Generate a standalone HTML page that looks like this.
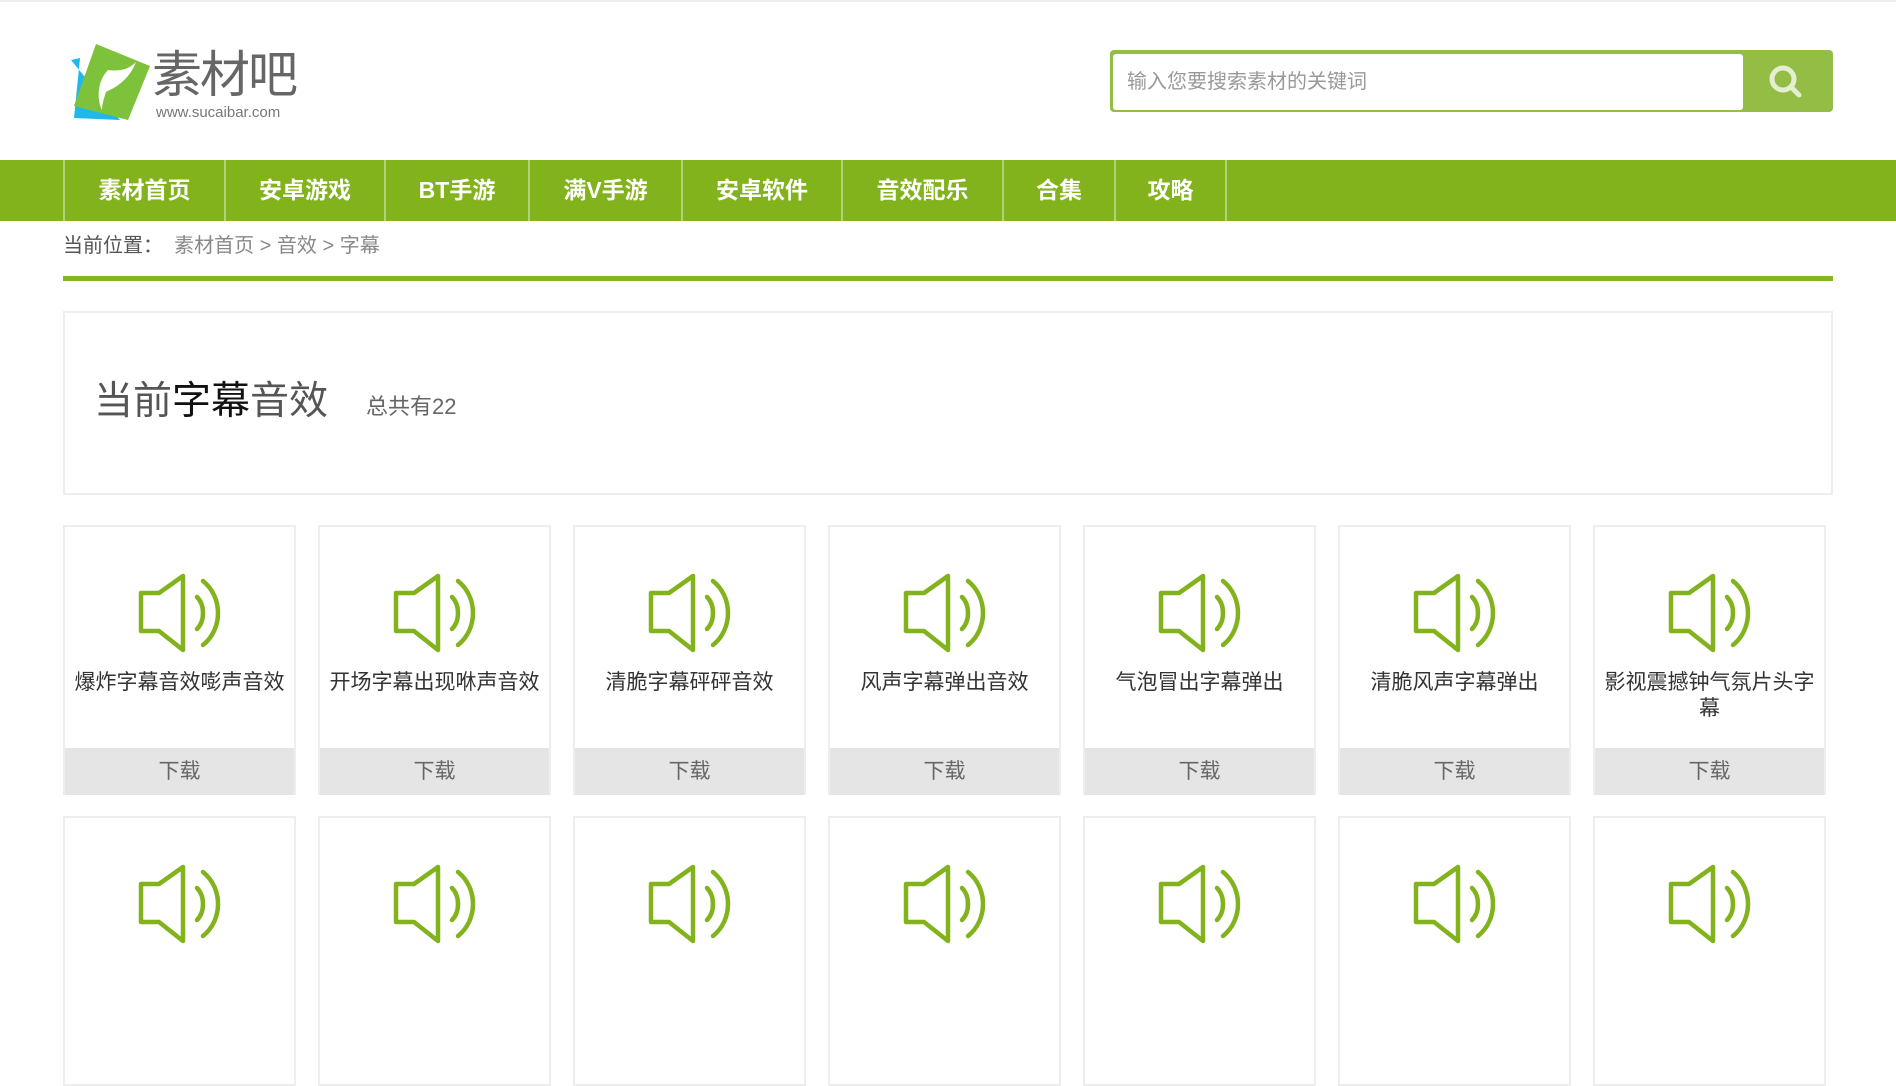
<!DOCTYPE html>
<html><head><meta charset="utf-8"><style>
*{margin:0;padding:0;box-sizing:border-box}
body{width:1896px;height:894px;overflow:hidden;background:#fff;font-family:"Liberation Sans","Noto Sans CJK SC",sans-serif;border-top:2px solid #eee;position:relative}
.abs{position:absolute}
.nav{position:absolute;left:0;top:158px;width:1896px;height:61px;background:#82b21c}
.nav a{position:absolute;top:0;height:61px;line-height:61px;color:#fff;font-weight:bold;font-size:23px;text-align:center;border-left:2px solid #b3d277;text-decoration:none}
.card{position:absolute;width:233px;height:270px;border:2px solid #eee;background:#fff}
.card svg{position:absolute;left:72px;top:46px}
.card .t{position:absolute;left:4px;right:4px;top:143px;text-align:center;font-size:21px;line-height:26px;color:#333}
.card .d{position:absolute;left:0;right:0;top:221px;height:47px;background:#e5e5e5;text-align:center;line-height:47px;font-size:21px;color:#666}
</style></head><body>
<svg class="abs" style="left:68px;top:40px" width="86" height="78" viewBox="0 0 86 78">
<path d="M3 18 L12 16 L6 76 L52 78 Z" fill="#1fb8e8"/>
<path d="M28 2 L82 24 L60 78 L6 64 Z" fill="#7dc23a"/>
<path d="M40 28 C54 30 62 26 68 20 C60 40 46 46 38 50 C36 56 34 62 34 68 C28 56 30 38 40 28 Z" fill="#fff"/>
</svg>
<div class="abs" style="left:152px;top:44px;font-size:50px;line-height:58px;color:#666;letter-spacing:-2px">素材吧</div>
<div class="abs" style="left:156px;top:102px;font-size:15px;color:#777">www.sucaibar.com</div>
<div class="abs" style="left:1110px;top:48px;width:723px;height:62px;background:#93bd45;border-radius:4px"></div>
<div class="abs" style="left:1113px;top:52px;width:630px;height:56px;background:#fff;border-radius:3px;font-size:20px;line-height:56px;color:#999;padding-left:14px">输入您要搜索素材的关键词</div>
<svg class="abs" style="left:1766px;top:60px" width="40" height="40" viewBox="0 0 40 40"><circle cx="17" cy="17" r="11" fill="none" stroke="#e4efd2" stroke-width="5"/><path d="M25 25 L33 33" stroke="#e4efd2" stroke-width="5" stroke-linecap="round"/></svg>
<div class="nav">
<a style="left:63px;width:161px">素材首页</a>
<a style="left:224px;width:160px">安卓游戏</a>
<a style="left:384px;width:144px">BT手游</a>
<a style="left:528px;width:153px">满V手游</a>
<a style="left:681px;width:160px">安卓软件</a>
<a style="left:841px;width:161px">音效配乐</a>
<a style="left:1002px;width:112px">合集</a>
<a style="left:1114px;width:113px;border-right:2px solid #b3d277">攻略</a>
</div>
<div class="abs" style="left:63px;top:230px;font-size:20px;line-height:28px;color:#555">当前位置：<span style="color:#888">&nbsp;&nbsp;素材首页 &gt; 音效 &gt; 字幕</span></div>
<div class="abs" style="left:63px;top:274px;width:1770px;height:5px;background:#85b620"></div>
<div class="abs" style="left:63px;top:309px;width:1770px;height:184px;border:2px solid #eee"></div>
<div class="abs" style="left:94px;top:376px;font-size:39px;line-height:48px;color:#555">当前<span style="color:#111">字幕</span>音效</div>
<div class="abs" style="left:366px;top:390px;font-size:22px;line-height:30px;color:#666">总共有22</div>
<div id="g"></div>
<script>
var t=["爆炸字幕音效嘭声音效","开场字幕出现咻声音效","清脆字幕砰砰音效","风声字幕弹出音效","气泡冒出字幕弹出","清脆风声字幕弹出","影视震撼钟气氛片头字<br>幕"];
var s='<svg width="88" height="80" viewBox="0 0 88 80"><path d="M4 20 H22 L46 3 V77 L22 58 H4 Z" fill="none" stroke="#82b21c" stroke-width="4.5" stroke-linejoin="round"/><path d="M60 24 C68 32 68 48 60 56" fill="none" stroke="#82b21c" stroke-width="4.5" stroke-linecap="round"/><path d="M66 8 C86 24 86 56 66 72" fill="none" stroke="#82b21c" stroke-width="4.5" stroke-linecap="round"/></svg>';
var h='';
for(var r=0;r<2;r++)for(var i=0;i<7;i++){h+='<div class="card" style="left:'+(63+i*255)+'px;top:'+(523+r*291)+'px">'+s+(r==0?'<div class="t">'+t[i]+'</div><div class="d">下载</div>':'')+'</div>';}
document.getElementById('g').innerHTML=h;
</script>
</body></html>
